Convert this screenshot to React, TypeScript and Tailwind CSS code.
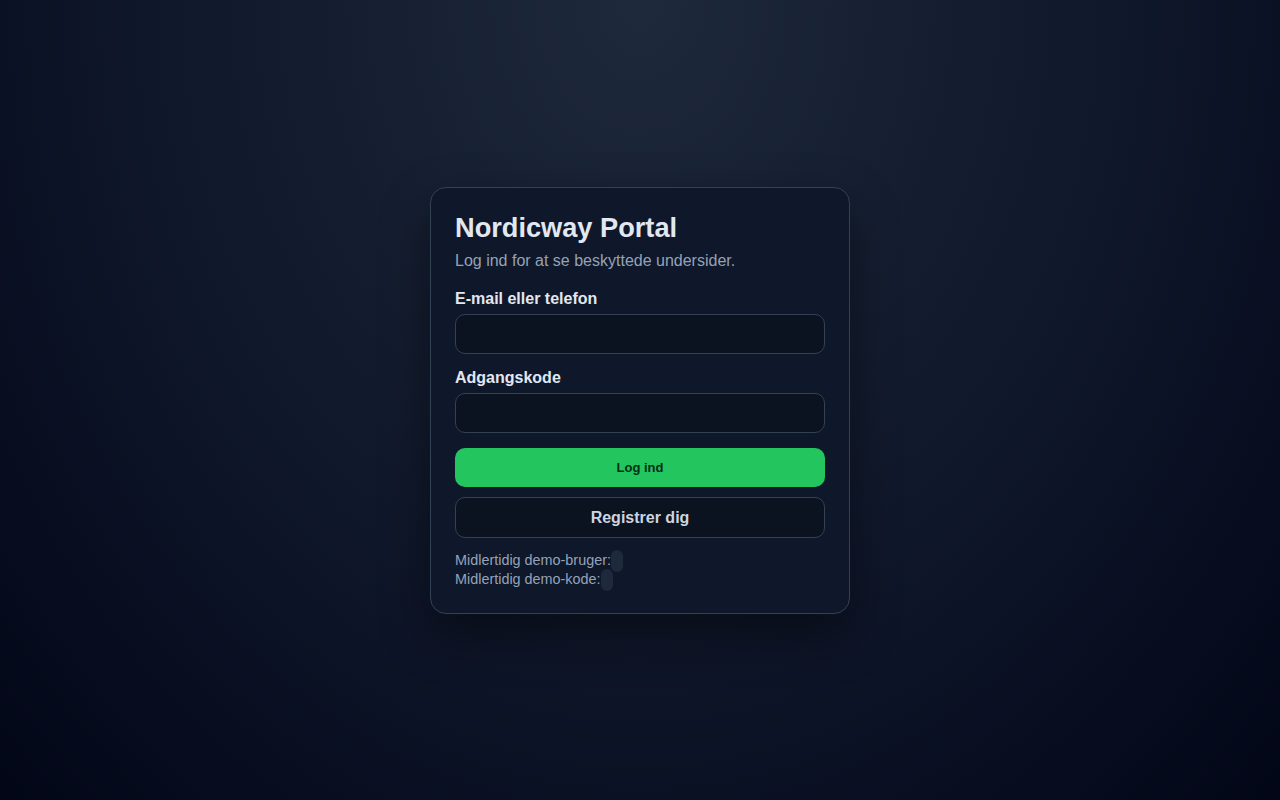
import React from "react";

export default function App() {
  return (
    <div
      className="min-h-screen w-full flex items-center justify-center pt-[1px] bg-[radial-gradient(ellipse_at_top,#1e293b_0%,#0f172a_55%,#020617_100%)]"
      style={{ fontFamily: '"Liberation Sans", Arial, sans-serif' }}
    >
      <div className="w-[420px] rounded-[16px] border border-[#334155] bg-[#0f172a] p-6 shadow-[0_20px_50px_rgba(0,0,0,0.45)]">
        <h1 className="m-0 text-[27.2px] leading-[1.2] font-bold text-[#e2e8f0]">Nordicway Portal</h1>
        <p className="mt-[4px] text-[16px] leading-[24px] text-[#94a3b8]">Log ind for at se beskyttede undersider.</p>

        <div className="mt-[16px] flex flex-col">
          <label className="block text-[16px] leading-[1.2] font-bold text-[#e2e8f0] mb-[6px]">E-mail eller telefon</label>
          <input className="h-[40px] w-full rounded-[10px] border border-[#334155] bg-[#0b1220] px-3 text-[#e2e8f0] outline-none" />
        </div>

        <div className="mt-[14px] flex flex-col">
          <label className="block text-[16px] leading-[1.2] font-bold text-[#e2e8f0] mb-[6px]">Adgangskode</label>
          <input type="password" className="h-[40px] w-full rounded-[10px] border border-[#334155] bg-[#0b1220] px-3 text-[#e2e8f0] outline-none" />
        </div>

        <button className="mt-[15px] h-[39px] w-full rounded-[10px] bg-[#22c55e] text-[13px] font-bold text-[#052e16]">
          Log ind
        </button>
        <button className="mt-[10px] h-[41px] w-full rounded-[10px] border border-[#334155] bg-[#0b1220] text-[16px] font-bold text-[#cbd5e1]">
          Registrer dig
        </button>

        <div className="mt-[13px] text-[14.4px] leading-[19px] text-[#94a3b8]">
          <div>
            Midlertidig demo-bruger:
            <code
              className="rounded-[7px] bg-[#1e293b] px-[6px] py-[3px] text-[14.4px] leading-[0]"
              style={{ fontFamily: '"Liberation Mono", monospace' }}
            ></code>
          </div>
          <div>
            Midlertidig demo-kode:
            <code
              className="rounded-[7px] bg-[#1e293b] px-[6px] py-[3px] text-[14.4px] leading-[0]"
              style={{ fontFamily: '"Liberation Mono", monospace' }}
            ></code>
          </div>
        </div>
      </div>
    </div>
  );
}
